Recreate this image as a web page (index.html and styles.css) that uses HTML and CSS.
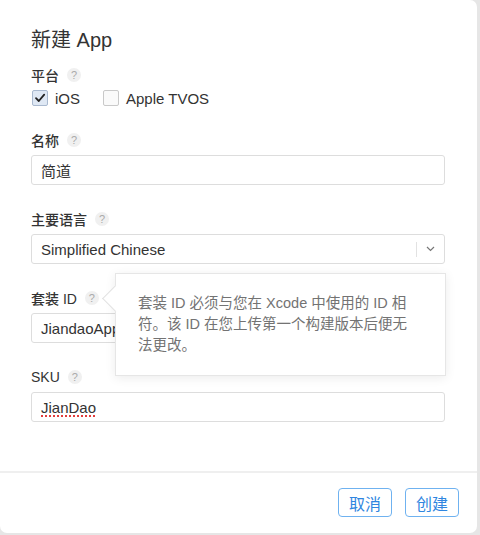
FILE: index.html
```html
<!DOCTYPE html>
<html lang="zh-CN">
<head>
  <meta charset="UTF-8" />
  <meta name="viewport" content="width=device-width, initial-scale=1.0"/>
  <title>新建 App</title>
  <link rel="stylesheet" href="styles.css">
</head>
<body>
  <div class="dialog">
    <div class="content">
      <h1 class="title">新建 App</h1>

      <div class="label">平台 <span class="help">?</span></div>
      <div class="platforms">
        <label class="check">
          <span class="box checked">
            <svg width="12" height="12" viewBox="0 0 12 12"><path d="M2 6.2 L4.8 9 L10.2 2.6" fill="none" stroke="#222" stroke-width="1.8" stroke-linecap="round" stroke-linejoin="round"/></svg>
          </span>
          iOS
        </label>
        <label class="check">
          <span class="box"></span>
          Apple TVOS
        </label>
      </div>

      <div class="field first">
        <div class="label">名称 <span class="help">?</span></div>
        <div class="input">简道</div>
      </div>

      <div class="field">
        <div class="label">主要语言 <span class="help">?</span></div>
        <div class="input select">
          <span class="value">Simplified Chinese</span>
          <span class="divider"></span>
          <svg class="chevron" width="9" height="6" viewBox="0 0 9 6"><path d="M1 1 L4.5 4.5 L8 1" fill="none" stroke="#777" stroke-width="1.2"/></svg>
        </div>
      </div>

      <div class="field bundle">
        <div class="label">套装 ID <span class="help">?</span></div>
        <div class="input">JiandaoApp</div>
        <div class="tooltip">
          <span class="arrow"></span>
          <p>套装 ID 必须与您在 Xcode 中使用的 ID 相符。该 ID 在您上传第一个构建版本后便无法更改。</p>
        </div>
      </div>

      <div class="field">
        <div class="label">SKU <span class="help">?</span></div>
        <div class="input"><span class="misspelled">JianDao</span></div>
      </div>
    </div>

    <div class="footer">
      <button class="btn">取消</button>
      <button class="btn">创建</button>
    </div>
  </div>
</body>
</html>
```

FILE: styles.css
```css
body {
  margin: 0;
  background: #e6e6e6;
  font-family: "Liberation Sans", "Noto Sans CJK SC", sans-serif;
  color: #333;
}
.dialog {
  width: 477px;
  height: 533px;
  background: #fff;
  border-radius: 0 7px 7px 7px;
  display: flex;
  flex-direction: column;
  overflow: hidden;
}
.content {
  flex: 1;
  padding: 28px 32px 0 31px;
}
.title {
  margin: 0 0 13px;
  font-size: 20px;
  line-height: 24px;
  font-weight: normal;
}
.label {
  display: flex;
  align-items: center;
  gap: 8px;
  height: 20px;
  font-size: 14px;
  font-weight: 500;
}
.help {
  width: 14px;
  height: 14px;
  border-radius: 50%;
  background: #f0f0f0;
  color: #aaa;
  font-size: 11px;
  font-weight: normal;
  display: flex;
  align-items: center;
  justify-content: center;
}
.platforms {
  display: flex;
  align-items: center;
  height: 20px;
  margin-top: 3px;
  font-size: 15px;
}
.check {
  display: flex;
  align-items: center;
  gap: 7px;
  margin-right: 22px;
}
.box {
  width: 14px;
  height: 14px;
  border: 1px solid #c9c9c9;
  border-radius: 2px;
  background: #fafafa;
  display: flex;
  align-items: center;
  justify-content: center;
  margin-left: 1px;
}
.box.checked {
  background: #dfe8f4;
  border-color: #a9b9cf;
}
.field {
  margin-top: 24px;
}
.field.first {
  margin-top: 22px;
}
.bundle {
  position: relative;
}
.input {
  box-sizing: border-box;
  height: 30px;
  margin-top: 5px;
  padding: 0 9px;
  border: 1px solid #ddd;
  border-radius: 3px;
  display: flex;
  align-items: center;
  font-size: 15px;
  color: #333;
  white-space: nowrap;
  overflow: hidden;
}
.select .value {
  flex: 1;
}
.select .divider {
  width: 1px;
  height: 15px;
  background: #e2e2e2;
  margin-right: 9px;
}
.misspelled {
  text-decoration: underline dotted #e23c3c;
  text-decoration-thickness: 2px;
  text-underline-offset: 3px;
}
.tooltip {
  position: absolute;
  left: 84px;
  top: -15px;
  width: 331px;
  box-sizing: border-box;
  padding: 19px 30px 19px 22px;
  background: #fff;
  border: 1px solid #e6e6e6;
  box-shadow: 0 2px 10px rgba(0, 0, 0, 0.08);
}
.tooltip p {
  margin: 0;
  font-size: 14.5px;
  line-height: 21px;
  color: #737373;
  position: relative;
}
.tooltip .arrow {
  position: absolute;
  left: -10px;
  top: 15px;
  width: 18px;
  height: 18px;
  background: #fff;
  border-left: 1px solid #e2e2e2;
  border-bottom: 1px solid #e2e2e2;
  transform: rotate(45deg);
}
.footer {
  height: 62px;
  border-top: 2px solid #efefef;
  display: flex;
  justify-content: flex-end;
  align-items: flex-start;
  gap: 13px;
  padding: 15px 18px 0 0;
  box-sizing: border-box;
}
.btn {
  width: 54px;
  height: 29px;
  padding: 0;
  background: #fff;
  border: 1px solid #6fb2f0;
  border-radius: 4px;
  color: #2f86e0;
  font-family: "Noto Sans CJK SC", sans-serif;
  font-size: 16px;
}
```
